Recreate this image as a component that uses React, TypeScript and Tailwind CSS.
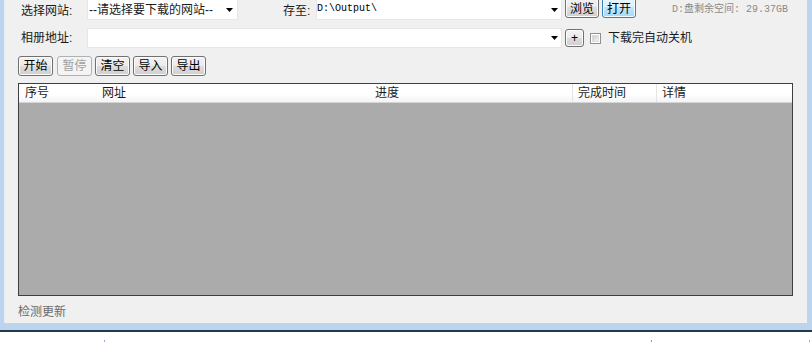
import React from "react";

const Arrow = () => (
  <svg width="7" height="4" viewBox="0 0 7 4" className="shrink-0">
    <path d="M0 0H7L3.5 4Z" fill="#000" />
  </svg>
);

const btnNormal =
  "flex items-center justify-center rounded-[3px] border border-[#707070] bg-[linear-gradient(#f2f2f2_0%,#ebebeb_50%,#dddddd_50%,#cfcfcf_100%)] shadow-[inset_0_0_0_1px_#fcfcfc] text-black";
const btnDisabled =
  "flex items-center justify-center rounded-[3px] border border-[#adb2b5] bg-[#f4f4f4] text-[#a0a0a0]";
const btnFocus =
  "flex items-center justify-center rounded-[3px] border border-[#3c7fb1] bg-[linear-gradient(#eaf6fd_0%,#d9f0fc_50%,#bee6fd_50%,#a7d9f5_100%)] shadow-[inset_0_0_0_1px_#f4fbfe] text-black";

export default function App() {
  return (
    <div className="w-[812px] h-[342px] bg-white overflow-hidden font-['Liberation_Sans','Noto_Sans_CJK_SC',sans-serif] text-[12px] leading-[16px] text-black">
      <div className="h-[332px] flex flex-col bg-[#bcd4ee] border-b-2 border-[#22384d]">
        <div className="flex-1 flex pl-[4px] pr-[5px] pb-[7px] min-h-0">
          <div className="flex-1 flex flex-col bg-[#f0f0f0] border-l border-[#e4edf7] overflow-hidden min-w-0">
            {/* Row 1 */}
            <div className="flex items-start mt-[-3px] h-[23px] pl-[16px] shrink-0">
              <div className="w-[66px] mt-[6px] text-[#1a1a1a]">选择网站:</div>
              <div className="w-[151px] h-[23px] bg-white border border-[#e6e6e6] flex items-center justify-between pl-[1px] pr-[4px]">
                <span className="pt-[2px] text-[#1a1a1a]">--请选择要下载的网站--</span>
                <span className="pt-[2px]"><Arrow /></span>
              </div>
              <div className="ml-[45px] w-[33px] mt-[6px] text-[#1a1a1a]">存至:</div>
              <div className="w-[246px] h-[23px] bg-white border border-[#e6e6e6] flex items-center justify-between pl-[0px] pr-[3px]">
                <span className="pt-[1px] font-['Liberation_Mono',monospace] text-[10px]">D:\Output\</span>
                <span className="pt-[2px]"><Arrow /></span>
              </div>
              <div className={"ml-[3px] w-[34px] h-[21px] pt-[2px] " + btnNormal}>浏览</div>
              <div className={"ml-[3px] w-[34px] h-[21px] pt-[2px] " + btnFocus}>打开</div>
              <div className="ml-[36px] mt-[5px] text-[10px] text-[#8a8a8a] font-['Liberation_Mono','Noto_Sans_CJK_SC',monospace] whitespace-nowrap">
                D:盘剩余空间: 29.37GB
              </div>
            </div>

            {/* Row 2 */}
            <div className="flex items-center h-[20px] mt-[8px] pl-[16px] shrink-0">
              <div className="w-[66px] text-[#1a1a1a]">相册地址:</div>
              <div className="w-[475px] h-[20px] bg-white border border-[#e6e6e6] flex items-center justify-end pr-[3px]">
                <Arrow />
              </div>
              <div className={"ml-[3px] w-[19px] h-[18px] " + btnNormal}>+</div>
              <div className="ml-[6px] w-[11px] h-[11px] border border-[#8e8f8f] bg-white p-[1px]">
                <div className="w-full h-full bg-[linear-gradient(135deg,#cbcbcb,#f4f4f4)] border border-[#dcdcdc]" />
              </div>
              <div className="ml-[7px] text-[#1a1a1a]">下载完自动关机</div>
            </div>

            {/* Row 3 */}
            <div className="flex h-[20px] mt-[8px] pl-[13px] shrink-0">
              <div className={"w-[35px] h-[20px] " + btnNormal}>开始</div>
              <div className={"ml-[4px] w-[35px] h-[20px] " + btnDisabled}>暂停</div>
              <div className={"ml-[3px] w-[35px] h-[20px] " + btnNormal}>清空</div>
              <div className={"ml-[3px] w-[35px] h-[20px] " + btnNormal}>导入</div>
              <div className={"ml-[3px] w-[35px] h-[20px] " + btnNormal}>导出</div>
            </div>

            {/* Table */}
            <div className="mt-[7px] ml-[13px] mr-[14px] h-[213px] border border-[#3f3f3f] flex flex-col shrink-0">
              <div className="h-[19px] flex bg-[linear-gradient(#ffffff_0%,#ffffff_55%,#f3f4f6_100%)] border-b border-[#d5d5d5] shrink-0 text-[#1a1a1a]">
                <div className="w-[77px] pl-[6px] flex items-center">序号</div>
                <div className="w-[273px] pl-[6px] flex items-center">网址</div>
                <div className="w-[204px] pl-[6px] flex items-center border-r border-[#e4e4e4]">进度</div>
                <div className="w-[84px] pl-[5px] flex items-center border-r border-[#e4e4e4]">完成时间</div>
                <div className="flex-1 pl-[5px] flex items-center">详情</div>
              </div>
              <div className="flex-1 bg-[#ababab]" />
            </div>

            {/* Footer */}
            <div className="pl-[13px] pt-[8px] text-[#6a6a6a]">检测更新</div>
          </div>
        </div>
      </div>
      <div className="h-[10px] flex items-end">
        <div className="ml-[104px] w-[1px] h-[2px] bg-[#7fb3e6]" />
        <div className="ml-[546px] w-[1px] h-[2px] bg-[#e07a7a]" />
        <div className="ml-[157px] w-[1px] h-[2px] bg-[#7fb3e6]" />
      </div>
    </div>
  );
}
